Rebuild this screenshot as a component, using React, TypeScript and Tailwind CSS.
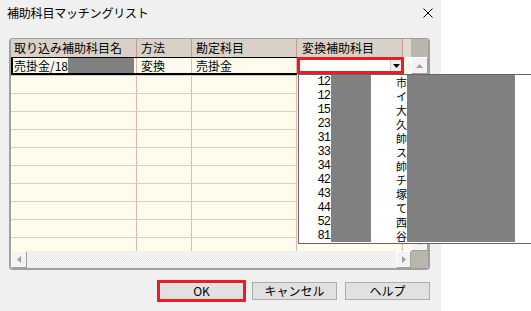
import React from "react";

const cols = [
  { label: "取り込み補助科目名", w: "w-[126px]", pad: "pl-[3px]" },
  { label: "方法", w: "w-[55px]", pad: "pl-[4px]" },
  { label: "勘定科目", w: "w-[105px]", pad: "pl-[4px]" },
  { label: "変換補助科目", w: "w-[106px]", pad: "pl-[5px]" },
];

// codes + first letter of the matching sub-account (rest is masked)
const listItems: [string, string][] = [
  ["12", "市"],
  ["12", "イ"],
  ["15", "大"],
  ["23", "久"],
  ["31", "帥"],
  ["33", "ス"],
  ["34", "帥"],
  ["42", "チ"],
  ["43", "塚"],
  ["44", "て"],
  ["52", "西"],
  ["81", "谷"],
];

function Arrow({ dir, color = "#a0a0a0" }: { dir: "up" | "down" | "left" | "right"; color?: string }) {
  const pts = {
    up: "0,4 3.5,0 7,4",
    down: "0,0 3.5,4 7,0",
    left: "4,0 0,3.5 4,7",
    right: "0,0 4,3.5 0,7",
  }[dir];
  const vertical = dir === "up" || dir === "down";
  return (
    <svg width={vertical ? 7 : 4} height={vertical ? 4 : 7} viewBox={vertical ? "0 0 7 4" : "0 0 4 7"}>
      <polygon points={pts} fill={color} />
    </svg>
  );
}

function ScrollButton({ dir, className }: { dir: "up" | "down" | "left" | "right"; className: string }) {
  return (
    <div
      className={`flex shrink-0 items-center justify-center border border-t-white border-l-white border-r-[#a0a0a0] border-b-[#a0a0a0] bg-[#f3f3f3] ${className}`}
    >
      <Arrow dir={dir} />
    </div>
  );
}

const track =
  "bg-[repeating-conic-gradient(#e6e6e6_0%_25%,#fbfbfb_0%_50%)] bg-[length:2px_2px]";

function EmptyRow() {
  return (
    <div className="flex h-[18px] shrink-0 border-t border-[#d6cebf]">
      {cols.map((c) => (
        <div key={c.label} className={`${c.w} shrink-0 border-r border-[#e8b7a7]`} />
      ))}
      <div className="flex-1" />
    </div>
  );
}

export default function App() {
  return (
    <div className="relative flex h-[311px] w-[531px] overflow-hidden bg-white font-['Noto_Sans_CJK_JP',sans-serif] text-[12px] leading-none text-black">
      <div className="flex h-full w-[441px] shrink-0 flex-col bg-[#f0f0f0]">
        {/* title bar */}
        <div className="flex h-[26px] shrink-0 items-center justify-between pl-[7px] pr-[8px]">
          <span className="tracking-[-0.2px]">補助科目マッチングリスト</span>
          <svg width="10" height="10" viewBox="0 0 10 10">
            <path d="M0.5 0.5 L9.5 9.5 M9.5 0.5 L0.5 9.5" stroke="#000" strokeWidth="1" />
          </svg>
        </div>

        {/* grid frame */}
        <div className="ml-[9px] mr-[11px] mt-[12px] flex h-[232px] shrink-0 flex-col overflow-hidden rounded-[4px] border-x-2 border-b-2 border-t border-[#a0a0a0]">
          {/* header */}
          <div className="flex h-[18px] shrink-0 bg-[#d9d1c8]">
            {cols.map((c) => (
              <div key={c.label} className={`${c.w} ${c.pad} flex shrink-0 items-center border-r border-[#c39b8f]`}>
                {c.label}
              </div>
            ))}
            <div className="flex-1 bg-[#e0dad2]" />
            <div className="w-[17px] shrink-0 bg-[#bab6ae]" />
          </div>

          {/* body */}
          <div className="flex min-h-0 flex-1">
            <div className="flex min-w-0 flex-1 flex-col overflow-hidden bg-[#fffcee]">
              {/* first row: focused */}
              <div className="flex h-[18px] shrink-0">
                <div className="flex w-[286px] shrink-0 border-b-2 border-l-2 border-t border-black">
                  <div className="flex w-[124px] shrink-0 items-center border-r border-[#e8b7a7] pl-[1px] pr-[2px]">
                    <span>売掛金/18</span>
                    <div className="ml-auto h-full w-[66px] bg-[#808080]" />
                  </div>
                  <div className="flex w-[55px] shrink-0 items-center border-r border-[#e8b7a7] pl-[4px]">変換</div>
                  <div className="flex w-[105px] shrink-0 items-center border-r border-[#e8b7a7] pl-[4px]">売掛金</div>
                </div>
                <div className="flex h-[17px] w-[107px] shrink-0 justify-end border-[3px] border-[#ed1c24] bg-white">
                  <div className="flex w-[11px] items-center justify-center border-l border-[#d0d0d0] bg-[#eeeeee]">
                    <Arrow dir="down" color="#000" />
                  </div>
                </div>
                <div className="flex-1" />
              </div>
              {Array.from({ length: 10 }, (_, i) => (
                <EmptyRow key={i} />
              ))}
            </div>

            {/* vertical scrollbar */}
            <div className={`flex w-[17px] shrink-0 flex-col ${track}`}>
              <ScrollButton dir="up" className="h-[17px] w-[17px]" />
              <div className="flex-1" />
              <ScrollButton dir="down" className="h-[17px] w-[17px]" />
            </div>
          </div>

          {/* horizontal scrollbar */}
          <div className="flex h-[17px] shrink-0">
            <div className={`flex flex-1 ${track}`}>
              <ScrollButton dir="left" className="h-[17px] w-[16px]" />
              <div className="flex-1" />
              <ScrollButton dir="right" className="h-[17px] w-[15px]" />
            </div>
            <div className="w-[17px] shrink-0 bg-[#bab6ae]" />
          </div>
        </div>

        {/* buttons */}
        <div className="mt-[12px] flex justify-end gap-[8px] pr-[11px]">
          <button className="h-[18px] w-[85px] border border-[#adadad] bg-[#e1e1e1] outline-[3px] outline-offset-[-1px] outline-[#ed1c24] outline-solid">
            OK
          </button>
          <button className="h-[18px] w-[85px] border border-[#adadad] bg-[#e1e1e1]">キャンセル</button>
          <button className="h-[18px] w-[85px] border border-[#adadad] bg-[#e1e1e1]">ヘルプ</button>
        </div>
      </div>

      {/* open combo list */}
      <div className="absolute left-[298px] top-[74px] flex h-[170px] w-[240px] border border-[#646464] bg-white">
        <div className="flex w-[32px] shrink-0 flex-col items-end font-['Liberation_Mono',monospace] text-[12px] tracking-[-1px]">
          {listItems.map(([code], i) => (
            <div key={i} className="flex h-[14px] items-center pr-[1px]">
              {code}
            </div>
          ))}
        </div>
        <div className="mb-[1px] w-[40px] shrink-0 bg-[#808080]" />
        <div className="w-[25px] shrink-0" />
        <div className="flex w-[11px] shrink-0 flex-col text-[11px]">
          {listItems.map(([, ch], i) => (
            <div key={i} className="flex h-[14px] items-center">
              {ch}
            </div>
          ))}
        </div>
        <div className="mb-[1px] w-[108px] shrink-0 bg-[#808080]" />
      </div>
    </div>
  );
}
